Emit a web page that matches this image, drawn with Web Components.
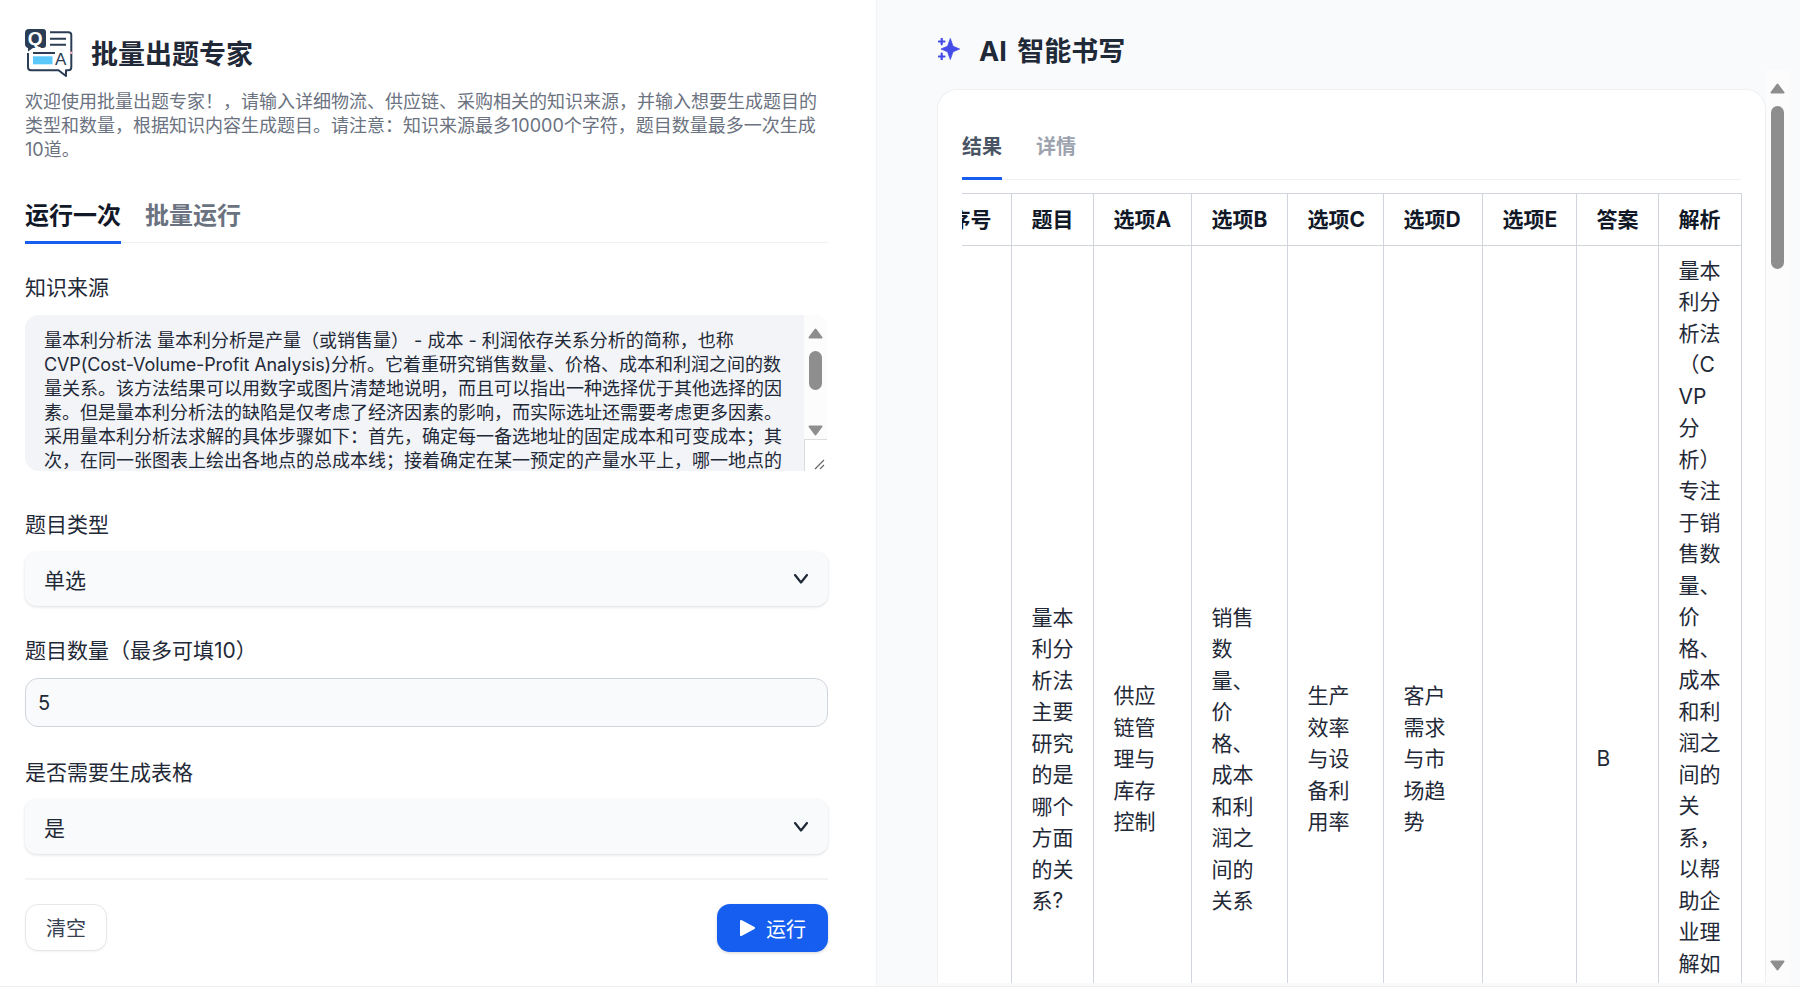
<!DOCTYPE html>
<html lang="zh-CN">
<head>
<meta charset="utf-8">
<title>批量出题专家</title>
<style>
html,body{margin:0;padding:0;height:987px;overflow:hidden;background:#fff;font-family:Inter,"Noto Sans CJK SC",sans-serif;font-size:18px;color:#111827}
</style>
</head>
<body>
<app-shell>
  <left-panel slot="left">
    <app-heading>批量出题专家</app-heading>
    <intro-text>欢迎使用批量出题专家！，请输入详细物流、供应链、采购相关的知识来源，并输入想要生成题目的类型和数量，根据知识内容生成题目。请注意：知识来源最多10000个字符，题目数量最多一次生成10道。</intro-text>
    <tab-bar size="large" style="margin-top:37px">
      <tab-item active>运行一次</tab-item>
      <tab-item>批量运行</tab-item>
    </tab-bar>
    <form-field label="知识来源" style="margin-top:30px"><source-box>量本利分析法 量本利分析是产量（或销售量） - 成本 - 利润依存关系分析的简称，也称<br><span style="letter-spacing:-.1px">CVP(Cost-Volume-Profit Analysis)</span>分析。它着重研究销售数量、价格、成本和利润之间的数<br>量关系。该方法结果可以用数字或图片清楚地说明，而且可以指出一种选择优于其他选择的因<br>素。但是量本利分析法的缺陷是仅考虑了经济因素的影响，而实际选址还需要考虑更多因素。<br>采用量本利分析法求解的具体步骤如下：首先，确定每一备选地址的固定成本和可变成本；其<br>次，在同一张图表上绘出各地点的总成本线；接着确定在某一预定的产量水平上，哪一地点的</source-box></form-field>
    <form-field label="题目类型" style="margin-top:39px"><select-box>单选</select-box></form-field>
    <form-field label="题目数量（最多可填10）" style="margin-top:30px"><number-box>5</number-box></form-field>
    <form-field label="是否需要生成表格" style="margin-top:31px;--gap:12px"><select-box style="height:55px">是</select-box></form-field>
    <action-bar>
      <plain-button>清空</plain-button>
      <run-button>运行</run-button>
    </action-bar>
  </left-panel>
  <right-panel slot="right">
    <result-heading>AI 智能书写</result-heading>
    <result-scroller>
      <result-card>
        <tab-bar size="small">
          <tab-item active>结果</tab-item>
          <tab-item>详情</tab-item>
        </tab-bar>
        <result-table></result-table>
      </result-card>
    </result-scroller>
  </right-panel>
</app-shell>

<script>
function define(name, css, html){
  customElements.define(name, class extends HTMLElement{
    constructor(){
      super();
      const r=this.attachShadow({mode:'open'});
      r.innerHTML='<style>'+css+'</style>'+(typeof html==='function'?html(this):html);
    }
  });
}
const tri=(dir)=>`<svg width="15" height="11" viewBox="0 0 15 11" style="display:block;flex:none"><path d="${dir==='up'?'M7.5 1.5 L13.5 9.5 H1.5 Z':'M1.5 1.5 H13.5 L7.5 9.5 Z'}" fill="#8e8e8e" stroke="#8e8e8e" stroke-width="2" stroke-linejoin="round"/></svg>`;

define('fake-scrollbar',`
  :host{display:flex;flex-direction:column;align-items:center;width:23px;flex:none;background:#fcfcfc;box-sizing:border-box}
  .thumb{width:13px;background:#8e8e8e;border-radius:7px;flex:none}
  .fill{flex:1}
`,(el)=>{
  const a=(n,d)=>el.getAttribute(n)||d;
  return `<div style="height:${a('pad',13)}px;flex:none"></div>${tri('up')}<div style="height:${a('gap',12)}px;flex:none"></div><div class="thumb" style="height:${a('thumb',39)}px"></div><div class="fill"></div>${tri('down')}<slot></slot>`;
});

define('app-shell',`
  :host{display:flex;width:1800px;height:987px;box-sizing:border-box;border-bottom:1px solid #eeeff1;overflow:hidden}
  .l{width:877px;flex:none;background:#fff;border-right:1px solid #f3f4f6;box-sizing:border-box}
  .r{flex:1;background:#f9fafb;min-width:0}
`,`<div class="l"><slot name="left"></slot></div><div class="r"><slot name="right"></slot></div>`);

define('left-panel',`:host{display:block;padding:29px 48px 0 25px}`,`<slot></slot>`);

define('app-heading',`
  :host{display:flex;align-items:center;gap:18px;height:48px}
  svg{flex:none;display:block}
  .t{font-size:27px;font-weight:700;color:#1f2937;line-height:44px;padding-top:4px}
`,`<svg width="48" height="48" viewBox="0 0 48 48" fill="none">
  <path d="M4 0 H18 Q21 0 21 3 V16 Q21 19 18 19 H8 L3 22.5 V19 Q0 18 0 15 V4 Q0 0 4 0 Z" fill="#2b3d55"/>
  <text x="10.2" y="15.7" text-anchor="middle" font-family="Liberation Sans" font-size="19" font-weight="700" fill="#fff">Q</text>
  <path d="M25 3.2 H43.5 Q46.3 3.2 46.3 6 V38.3 Q46.3 41.3 43.3 41.3 H41 V47 L33.5 41.3 H6 Q3 41.3 3 38.3 V24" stroke="#2b3d55" stroke-width="2" stroke-linejoin="round"/>
  <path d="M25 9.7 H41 M25 15.7 H41 M8 24 H30" stroke="#2b3d55" stroke-width="2"/>
  <rect x="8" y="27.3" width="19.5" height="8" fill="#5ac8fa"/>
  <text x="35.7" y="36" text-anchor="middle" font-family="Liberation Sans" font-size="17" fill="#2b3d55">A</text>
  <circle cx="46" cy="23.7" r="1.3" fill="#f7b2bb"/>
</svg><div class="t"><slot></slot></div>`);

define('intro-text',`:host{display:block;margin-top:13px;font-size:18px;line-height:24px;color:#6b7280}`,`<slot></slot>`);

define('tab-bar',`
  :host{display:flex;border-bottom:1px solid #eff0f2;gap:24px}
  :host([size=large]){gap:24px;font-size:24px;line-height:32px;margin-bottom:0}
  :host([size=small]){gap:34px;font-size:20px;line-height:28px;border-bottom-width:1px}
`,`<slot></slot>`);

define('tab-item',`
  :host{display:block;font-weight:700;padding-top:1px;padding-bottom:9px;margin-bottom:-2px;border-bottom:3px solid transparent;color:#6b7280}
  :host([active]){border-bottom-color:#155eef;color:#111827}
  :host-context(tab-bar[size=small]){padding-top:0;padding-bottom:16px;margin-bottom:-1px;color:#9ca3af}
  :host-context(tab-bar[size=small]):host([active]){color:#495464}
`,`<slot></slot>`);

define('form-field',`
  :host{display:block;--gap:13px}
  label{display:block;font-size:21px;line-height:28px;padding-top:1px;color:#1f2937;margin-bottom:var(--gap)}
`,(el)=>`<label>${el.getAttribute('label')}</label><slot></slot>`);

define('source-box',`
  :host{display:flex;height:156px;background:#f2f4f7;border-radius:14px;overflow:hidden}
  .txt{flex:1;min-width:0;padding:14px 0 0 19px;font-size:18px;line-height:24px;color:#1f2937;white-space:nowrap;overflow:hidden}
  .rz{height:32px;width:23px;box-sizing:border-box;border-top:1px solid #dcdcdc;border-left:1px solid #dcdcdc;background:#fff;margin-top:3px;flex:none;display:flex;align-items:flex-end;justify-content:flex-end;padding:0 2px 1px 0}
  .edge{width:1px;background:#fff;flex:none}
  svg{display:block}
`,`<div class="txt"><slot></slot></div><fake-scrollbar pad="13" gap="12" thumb="39"><div class="rz"><svg width="12" height="12" viewBox="0 0 12 12"><path d="M2 11 L11 2 M7 11 L11 7" stroke="#666" stroke-width="1.2"/></svg></div></fake-scrollbar><div class="edge"></div>`);

define('select-box',`
  :host{display:flex;align-items:center;justify-content:space-between;height:54px;background:#f9fafb;border-radius:12px;box-shadow:0 1px 3px rgba(16,24,40,.14);padding:0 18px 0 19px;font-size:21px;color:#1f2937;box-sizing:border-box}
  svg{display:block;flex:none}
`,`<slot></slot><svg width="18" height="14" viewBox="0 0 18 14" fill="none"><path d="M3 3 L9 10.5 L15 3" stroke="#1f2937" stroke-width="2.2" stroke-linecap="round" stroke-linejoin="round"/></svg>`);

define('number-box',`
  :host{display:flex;align-items:center;height:49px;background:#f9fafb;border:1px solid #d0d5dd;border-radius:13px;padding:0 12px;font-size:20px;color:#1f2937;box-sizing:border-box}
`,`<slot></slot>`);

define('action-bar',`
  :host{display:flex;justify-content:space-between;align-items:flex-start;margin-top:24px;border-top:2px solid #f3f4f6;padding-top:24px}
`,`<slot></slot>`);

define('plain-button',`
  :host{display:flex;align-items:center;justify-content:center;width:82px;height:47px;box-sizing:border-box;background:#fff;border:1px solid #e5e7eb;border-radius:13px;font-size:20px;color:#374151;box-shadow:0 1px 2px rgba(16,24,40,.05)}
`,`<slot></slot>`);

define('run-button',`
  :host{display:flex;align-items:center;justify-content:center;gap:10px;width:111px;height:48px;background:#155eef;border-radius:13px;font-size:20px;color:#fff;box-shadow:0 1px 3px rgba(16,24,40,.18)}
  svg{display:block;flex:none}
`,`<svg width="17" height="18" viewBox="0 0 17 18"><path d="M2 2 L15 9 L2 16 Z" fill="#fff" stroke="#fff" stroke-width="2" stroke-linejoin="round"/></svg><slot></slot>`);

define('right-panel',`:host{display:flex;flex-direction:column;height:986px;padding-left:60px;box-sizing:border-box;padding-right:11px}`,`<slot></slot>`);

define('result-heading',`
  :host{display:flex;align-items:center;gap:20px;height:40px;margin-top:29px;flex:none;font-size:27px;font-weight:700;color:#1f2937;margin-bottom:1px;word-spacing:4px}
  svg{display:block;flex:none;margin-left:1px;margin-right:-1px}
`,`<svg width="22" height="22" viewBox="0 0 22 22"><path d="M12.3 0.5 L15 8.2 L21.6 11 L15 13.8 L12.3 21.5 L9.6 13.8 L3 11 L9.6 8.2 Z" fill="#444ce7" stroke="#444ce7" stroke-width=".8" stroke-linejoin="round"/><path d="M3.7 0.7 V6.3 M0.9 3.5 H6.5 M3.7 15.7 V21.3 M0.9 18.5 H6.5" stroke="#444ce7" stroke-width="2.2" stroke-linecap="round"/></svg><slot></slot>`);

define('result-scroller',`
  :host{display:flex;height:915px;flex:none;margin-top:0;overflow:hidden}
  .v{flex:1;min-width:0;padding-top:19px;overflow:hidden;height:913px;box-sizing:border-box}
  fake-scrollbar{height:915px}
`,`<div class="v"><slot></slot></div><fake-scrollbar pad="13" gap="12" thumb="163" style="padding-bottom:14px"></fake-scrollbar>`);

define('result-card',`
  :host{display:block;background:#fff;border:1px solid #eff0f2;border-bottom:0;border-radius:20px 20px 0 0;padding:43px 24px 0 24px;height:1400px;box-sizing:border-box}
`,`<slot></slot>`);

const rows=[
 ['','量本<br>利分<br>析法<br>主要<br>研究<br>的是<br>哪个<br>方面<br>的关<br>系?','供应<br>链管<br>理与<br>库存<br>控制','销售<br>数<br>量、<br>价<br>格、<br>成本<br>和利<br>润之<br>间的<br>关系','生产<br>效率<br>与设<br>备利<br>用率','客户<br>需求<br>与市<br>场趋<br>势','','B','量本<br>利分<br>析法<br>（C<br>VP<br>分<br>析）<br>专注<br>于销<br>售数<br>量、<br>价<br>格、<br>成本<br>和利<br>润之<br>间的<br>关<br>系，<br>以帮<br>助企<br>业理<br>解如']
];
define('result-table',`
  :host{display:block;margin-top:13px;margin-right:-2px;overflow:hidden}
  table{border-collapse:collapse;table-layout:fixed;width:812px;margin-left:-33.5px;font-size:21px;line-height:31.5px;color:#1f2937}
  th,td{border:1px solid #d0d5dd;padding:9px 20px;text-align:left;white-space:nowrap;overflow:hidden}
  th{font-weight:700;color:#111827;padding:9.5px 20px}
  td{vertical-align:middle;font-weight:400}
  tbody tr{height:1028px}
  td.top{vertical-align:top}
`,`<table><colgroup><col style="width:82px"><col style="width:82px"><col style="width:98px"><col style="width:96px"><col style="width:96px"><col style="width:99px"><col style="width:94px"><col style="width:82px"><col style="width:83px"></colgroup><thead><tr>${['序号','题目','选项A','选项B','选项C','选项D','选项E','答案','解析'].map(h=>`<th>${h}</th>`).join('')}</tr></thead><tbody>${rows.map(r=>`<tr>${r.map((c,i)=>`<td${i===8?' class="top"':''}>${c}</td>`).join('')}</tr>`).join('')}</tbody></table>`);
</script>
</body>
</html>
